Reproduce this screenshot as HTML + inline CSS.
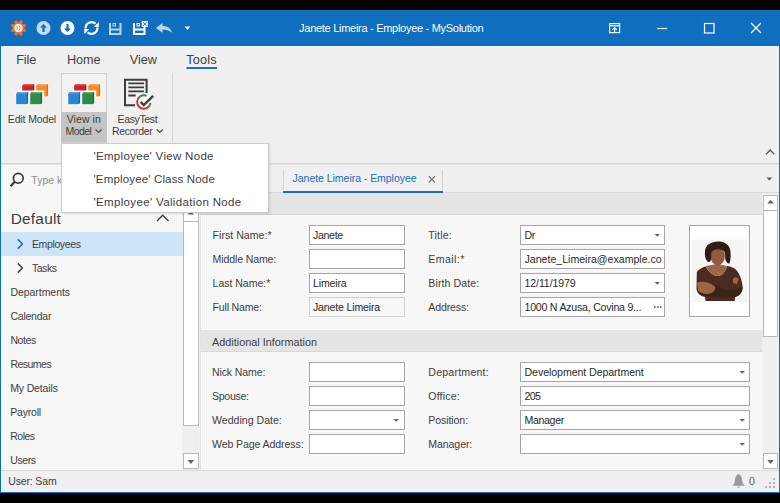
<!DOCTYPE html>
<html><head><meta charset="utf-8">
<style>
html,body{margin:0;padding:0;}
body{width:780px;height:503px;background:#000;position:relative;overflow:hidden;font-family:"Liberation Sans",sans-serif;}
.a{position:absolute;box-sizing:border-box;}
.t{position:absolute;white-space:pre;line-height:0;font-family:"Liberation Sans",sans-serif;}
.tb{position:absolute;box-sizing:border-box;background:#fff;border:1px solid #a6a6a6;height:20px;}
svg{position:absolute;left:0;top:0;}
.dot{background-color:#f9f9f9;background-image:conic-gradient(from 270deg, #f1f1f1 25%, transparent 0);background-size:2px 2px;}
</style></head><body>
<!-- window frame -->
<div class="a" style="left:0;top:10px;width:780px;height:483px;background:#106ebe;"></div>
<!-- ribbon -->
<div class="a" style="left:1px;top:46px;width:778px;height:117px;background:#f0f0f0;"></div>
<div class="a" style="left:1px;top:163px;width:778px;height:1px;background:#d9d9d9;"></div>
<div class="a" style="left:1px;top:164px;width:778px;height:1px;background:#e0e0e0;"></div>
<!-- nav panel -->
<div class="a" style="left:1px;top:165px;width:198px;height:1px;background:#f9f9f9;"></div>
<div class="a dot" style="left:1px;top:166px;width:198px;height:304px;background-position:1px 0;"></div>
<div class="a" style="left:182px;top:206px;width:17px;height:264px;background:#efefef;"></div>
<div class="a" style="left:199px;top:165px;width:2px;height:305px;background:#f2f2f2;"></div>
<div class="a" style="left:200px;top:193px;width:1px;height:277px;background:#e2e2e2;"></div>
<!-- tab strip -->
<div class="a" style="left:200px;top:165px;width:579px;height:28px;background:#f0f0f0;"></div>
<div class="a" style="left:200px;top:192px;width:579px;height:1px;background:#d9d9d9;"></div>
<div class="a" style="left:201px;top:193px;width:561px;height:21px;background:#e5e5e5;"></div>
<div class="a" style="left:201px;top:214px;width:561px;height:1px;background:#d5d5d5;"></div>
<div class="a dot" style="left:201px;top:215px;width:561px;height:255px;background-position:1px 1px;"></div>
<div class="a" style="left:762px;top:193px;width:17px;height:277px;background:#f0f0f0;"></div>
<!-- group header -->
<div class="a" style="left:201px;top:330px;width:561px;height:21px;background:#e5e5e5;"></div>
<div class="a" style="left:201px;top:351px;width:561px;height:1px;background:#d7d7d7;"></div>
<!-- status bar -->
<div class="a" style="left:1px;top:471px;width:778px;height:21px;background:#f0f0f0;"></div>
<div class="a" style="left:1px;top:470px;width:778px;height:1px;background:#d9d9d9;"></div>

<!-- highlight -->
<div class="a" style="left:1px;top:232px;width:182px;height:24px;background:#cde5f9;"></div>

<!-- View in Model pressed button -->
<div class="a" style="left:61px;top:73px;width:46px;height:70px;background:#f2f2f2;border:1px solid #d0d0d0;"></div>
<div class="a" style="left:61px;top:112px;width:46px;height:30px;background:#c4c4c4;"></div>
<div class="a" style="left:172px;top:73px;width:1px;height:69px;background:#d5d5d5;"></div>

<!-- nav scrollbar -->
<div class="a" style="left:183px;top:206px;width:16px;height:16px;background:#fff;border:1px solid #b9b9b9;"></div>
<div class="a" style="left:183px;top:221px;width:16px;height:205px;background:#fff;border:1px solid #b9b9b9;"></div>
<div class="a" style="left:183px;top:453px;width:16px;height:16px;background:#fff;border:1px solid #b9b9b9;"></div>

<!-- right scrollbar -->
<div class="a" style="left:763px;top:195px;width:15px;height:16px;background:#fff;border:1px solid #b9b9b9;"></div>
<div class="a" style="left:763px;top:210px;width:15px;height:127px;background:#fff;border:1px solid #b9b9b9;"></div>
<div class="a" style="left:763px;top:453px;width:15px;height:16px;background:#fff;border:1px solid #b9b9b9;"></div>

<!-- text boxes -->
<div class="tb" style="left:309px;top:225px;width:96px;"></div>
<div class="tb" style="left:309px;top:249px;width:96px;"></div>
<div class="tb" style="left:309px;top:273px;width:96px;"></div>
<div class="tb dot" style="left:309px;top:297px;width:96px;border-color:#d0d0d0;"></div>
<div class="tb" style="left:520px;top:225px;width:145px;"></div>
<div class="tb" style="left:520px;top:249px;width:145px;"></div>
<div class="tb" style="left:520px;top:273px;width:145px;"></div>
<div class="tb" style="left:520px;top:297px;width:145px;"></div>
<div class="a" style="left:689px;top:225px;width:61px;height:92px;background:#fff;border:1px solid #a6a6a6;"></div>
<div class="tb" style="left:309px;top:362px;width:96px;"></div>
<div class="tb" style="left:309px;top:386px;width:96px;"></div>
<div class="tb" style="left:309px;top:410px;width:96px;"></div>
<div class="tb" style="left:309px;top:434px;width:96px;"></div>
<div class="tb" style="left:520px;top:362px;width:230px;"></div>
<div class="tb" style="left:520px;top:386px;width:230px;"></div>
<div class="tb" style="left:520px;top:410px;width:230px;"></div>
<div class="tb" style="left:520px;top:434px;width:230px;"></div>

<!-- menu -->
<div class="a" style="left:61px;top:143px;width:208px;height:70px;background:#fff;border:1px solid #cccccc;box-shadow:1px 1px 2px rgba(0,0,0,0.12);z-index:5;"></div>

<svg width="780" height="503" viewBox="0 0 780 503">
  <!-- gear -->
  <g transform="translate(18.5,28)" fill="#f7701f">
    <circle r="5.7"/>
    <path d="M-1.1,-7.9 L1.1,-7.9 L2,-4.6 L-2,-4.6 Z" transform="rotate(22)"/><path d="M-1.1,-7.9 L1.1,-7.9 L2,-4.6 L-2,-4.6 Z" transform="rotate(67)"/><path d="M-1.1,-7.9 L1.1,-7.9 L2,-4.6 L-2,-4.6 Z" transform="rotate(112)"/><path d="M-1.1,-7.9 L1.1,-7.9 L2,-4.6 L-2,-4.6 Z" transform="rotate(157)"/><path d="M-1.1,-7.9 L1.1,-7.9 L2,-4.6 L-2,-4.6 Z" transform="rotate(202)"/><path d="M-1.1,-7.9 L1.1,-7.9 L2,-4.6 L-2,-4.6 Z" transform="rotate(247)"/><path d="M-1.1,-7.9 L1.1,-7.9 L2,-4.6 L-2,-4.6 Z" transform="rotate(292)"/><path d="M-1.1,-7.9 L1.1,-7.9 L2,-4.6 L-2,-4.6 Z" transform="rotate(337)"/>
    <circle r="4.1" cx="-0.1" fill="#fff"/>
    <path d="M-1.7,-2 Q-0.2,0 -1.7,2 M0.5,-2.8 Q2.6,0 0.5,2.8" stroke="#f7701f" stroke-width="1" fill="none"/>
  </g>
  <!-- up circle -->
  <circle cx="43.5" cy="28" r="7" fill="#c3dbf1"/>
  <path d="M43.5,24 L47,27.6 L44.6,27.6 L44.6,32 L42.4,32 L42.4,27.6 L40,27.6 Z" fill="#116cbd"/>
  <!-- down circle -->
  <circle cx="67.5" cy="28" r="7" fill="#ffffff"/>
  <path d="M67.5,32 L71,28.4 L68.6,28.4 L68.6,24 L66.4,24 L66.4,28.4 L64,28.4 Z" fill="#116cbd"/>
  <!-- refresh -->
  <g fill="none" stroke="#fff" stroke-width="2.1">
    <path d="M85.6,28.5 A6,6 0 0 1 95.5,23.6"/>
    <path d="M97.4,27.5 A6,6 0 0 1 87.5,32.4"/>
  </g>
  <path d="M98.8,22 L98.8,27.1 L93.8,27.1 Z" fill="#fff"/>
  <path d="M84.2,34 L84.2,28.9 L89.2,28.9 Z" fill="#fff"/>
  <!-- save 1 -->
  <g fill="#b9d4ee">
    <path d="M109,23 L111,23 L111,28.5 L119.5,28.5 L119.5,23 L121.5,23 L121.5,35 L109,35 Z M111,30.5 L111,33 L119.5,33 L119.5,30.5 Z" fill-rule="evenodd"/>
    <path d="M112.5,23 L116,23 L116,26.5 L112.5,26.5 Z M113.5,24 L113.5,25.5 L115,25.5 L115,24 Z" fill-rule="evenodd"/>
  </g>
  <!-- save 2 -->
  <g fill="#ffffff">
    <path d="M133,23 L135,23 L135,28.5 L143.5,28.5 L143.5,27 L145.5,27 L145.5,35 L133,35 Z M135,30.5 L135,33 L143.5,33 L143.5,30.5 Z" fill-rule="evenodd"/>
    <path d="M136.5,23 L140,23 L140,26.5 L136.5,26.5 Z M137.5,24 L137.5,25.5 L139,25.5 L139,24 Z" fill-rule="evenodd"/>
    <rect x="141.8" y="21" width="6" height="6"/>
  </g>
  <path d="M143,22.3 L146.6,25.8 M146.6,22.3 L143,25.8" stroke="#116cbd" stroke-width="1"/>
  <!-- undo -->
  <path d="M155.8,28 L162.5,23 L162.5,26 C167.5,26 171,28.5 172,32.8 C169,30.2 166,29.8 162.5,29.8 L162.5,32.8 Z" fill="#bcd5ee"/>
  <!-- qat dropdown -->
  <path d="M184.6,26.6 L190.4,26.6 L187.5,30.1 Z" fill="#fff"/>
  <!-- right title icons -->
  <g fill="none" stroke="#fff" stroke-width="1.2">
    <rect x="609.6" y="23.6" width="10" height="9"/>
    <path d="M609.6,25.8 L619.6,25.8"/>
    <path d="M614.6,32.6 L614.6,27.6 M612.4,29.8 L614.6,27.6 L616.8,29.8"/>
    <path d="M657,28.5 L667.2,28.5"/>
    <rect x="704.5" y="23.5" width="9.5" height="9.5"/>
    <path d="M751,23 L761,33 M761,23 L751,33"/>
  </g>

  <!-- Edit Model icon -->
  <g id="blocks">
    <g stroke="#ffffff" stroke-width="1.6" stroke-linejoin="round" style="paint-order:stroke">
      <path d="M22.2,85.6 L23.5,84.3 L34.2,84.3 L34.2,89.3 L33,90.5 L22.2,90.5 Z" fill="#d4202a"/>
      <path d="M36.2,85.6 L37.5,84.3 L48.1,84.3 L48.1,95.2 L46.8,96.5 L44.2,96.5 L44.2,90.5 L36.2,90.5 Z" fill="#f68b2b"/>
      <path d="M16.2,93.5 L17.7,92 L28.1,92 L28.1,102.8 L26.7,104.2 L16.2,104.2 Z" fill="#2a86d3"/>
      <path d="M30.2,93.5 L31.7,92 L42.1,92 L42.1,102.8 L40.7,104.2 L30.2,104.2 Z" fill="#2f8b45"/>
    </g>
    <path d="M22.2,85.6 L23.5,84.3 L34.2,84.3 L33,85.6 Z" fill="#e4545b"/>
    <path d="M33,85.6 L34.2,84.3 L34.2,89.3 L33,90.5 Z" fill="#a5131b"/>
    <path d="M36.2,85.6 L37.5,84.3 L48.1,84.3 L46.8,85.6 Z" fill="#f9a960"/>
    <path d="M46.8,85.6 L48.1,84.3 L48.1,95.2 L46.8,96.5 Z" fill="#d76e18"/>
    <path d="M16.2,93.5 L17.7,92 L28.1,92 L26.7,93.5 Z" fill="#5ea6e2"/>
    <path d="M26.7,93.5 L28.1,92 L28.1,102.8 L26.7,104.2 Z" fill="#1d66a8"/>
    <path d="M30.2,93.5 L31.7,92 L42.1,92 L40.7,93.5 Z" fill="#5fae72"/>
    <path d="M40.7,93.5 L42.1,92 L42.1,102.8 L40.7,104.2 Z" fill="#226b35"/>
  </g>
  <use href="#blocks" x="52" y="0"/>

  <!-- EasyTest icon -->
  <g fill="none" stroke="#3d3d3d" stroke-width="2">
    <path d="M135,105.2 L125,105.2 L125,79.8 L146.6,79.8 L146.6,93"/>
    <path d="M128.3,83.4 L144,83.4 M128.3,87.3 L144,87.3 M128.3,91.3 L144,91.3 M128.3,95.5 L135.7,95.5" stroke-width="1.8"/>
  </g>
  <circle cx="143.8" cy="102" r="8" fill="#fbfbfb"/>
  <path d="M139.95,96.51 A6.7,6.7 0 1 0 149.29,105.85" fill="none" stroke="#dc2a2f" stroke-width="1.9"/>
  <path d="M139.95,96.51 A6.7,6.7 0 0 1 146.63,95.93" fill="none" stroke="#259437" stroke-width="1.9"/>
  <path d="M149.29,105.85 A6.7,6.7 0 0 0 150.43,102.93" fill="none" stroke="#259437" stroke-width="1.9"/>
  <path d="M140.6,101.9 L143.8,105 L153.1,95.8" fill="none" stroke="#3f3f3f" stroke-width="2.4"/>

  <!-- ribbon chevrons -->
  <path d="M95.5,129.5 L98.6,132.4 L101.7,129.5" fill="none" stroke="#505050" stroke-width="1.3"/>
  <path d="M156.7,129.5 L159.8,132.4 L162.9,129.5" fill="none" stroke="#505050" stroke-width="1.3"/>
  <!-- tools underline -->
  <rect x="186.5" y="67" width="30.5" height="2" fill="#1c6cc0"/>
  <!-- collapse caret -->
  <path d="M766,154.4 L770.2,150 L774.4,154.4" fill="none" stroke="#555" stroke-width="1.3"/>

  <!-- search icon -->
  <circle cx="18.3" cy="178.3" r="4.9" fill="none" stroke="#3a3a3a" stroke-width="1.7"/>
  <path d="M14.8,181.8 L10.5,186.3" stroke="#3a3a3a" stroke-width="2.2"/>
  <!-- default caret -->
  <path d="M157,221 L162.7,215.3 L168.5,221" fill="none" stroke="#444" stroke-width="1.4"/>
  <!-- nav chevrons -->
  <path d="M17.8,239.4 L22.4,244 L17.8,248.6" fill="none" stroke="#1c6cc0" stroke-width="1.5"/>
  <path d="M17.8,263.4 L22.4,268 L17.8,272.6" fill="none" stroke="#444" stroke-width="1.5"/>
  <!-- nav scrollbar arrows -->
  <path d="M187.5,214.6 L190.75,211.2 L194,214.6 Z" fill="#666"/>
  <path d="M187.5,460 L194.2,460 L190.85,463.9 Z" fill="#666"/>

  <!-- tab -->
  <rect x="283" y="170" width="1" height="20" fill="#d3d3d3"/>
  <rect x="442" y="170" width="1" height="20" fill="#d3d3d3"/>
  <rect x="283" y="191" width="160" height="2" fill="#1c6cc0"/>
  <path d="M428.8,176.2 L435,182.4 M435,176.2 L428.8,182.4" stroke="#6a6a6a" stroke-width="1.1"/>
  <path d="M766.4,177.4 L772.2,177.4 L769.3,180.6 Z" fill="#555"/>

  <!-- right scrollbar arrows -->
  <path d="M767.2,203.5 L773.9,203.5 L770.55,199.7 Z" fill="#666"/>
  <path d="M767.2,460 L773.9,460 L770.55,463.9 Z" fill="#666"/>

  <!-- combo arrows -->
  <g fill="#666">
    <path d="M654.5,234 L660,234 L657.25,236.8 Z"/>
    <path d="M654.5,282 L660,282 L657.25,284.8 Z"/>
    <path d="M393.5,419 L399,419 L396.25,421.8 Z"/>
    <path d="M739.5,371 L745,371 L742.25,373.8 Z"/>
    <path d="M739.5,419 L745,419 L742.25,421.8 Z"/>
    <path d="M739.5,443 L745,443 L742.25,445.8 Z"/>
  </g>
  <!-- ellipsis -->
  <g fill="#444">
    <rect x="654" y="306.3" width="1.5" height="1.5"/>
    <rect x="657" y="306.3" width="1.5" height="1.5"/>
    <rect x="660" y="306.3" width="1.5" height="1.5"/>
  </g>

  <!-- photo -->
  <g>
    <rect x="691.5" y="239.6" width="56" height="62.4" fill="#f7f5f3"/>
    <path d="M705.6,266.5 C701,268 697.5,270 696.8,272.5 L696.5,289 C697,293 700,296 705,297 L705.6,301 L734.8,301 L735,297 C740,296 743,292 742.6,286.4 C742,280 739,271 733.9,268 C731,266.8 729,266.2 727,266 C726,271 722,276 718,276 C713,276 708,271 705.6,266.5 Z" fill="#4b2a1f"/>
    <path d="M705.6,266.5 C708,271 713,276 718,276 C722,276 726,271 727,266 C724,265 721,264.5 718,264.5 C713,264.5 709,265 705.6,266.5 Z" fill="#9a6646"/>
    <ellipse cx="717.7" cy="256" rx="7.2" ry="9.3" fill="#8f5c3d"/>
    <path d="M718,241.5 C711,241.5 705.5,245 705,251 C704.5,256 705.5,260 708,262 C709.5,262.5 711,261 711,259 L711.2,253 C712.5,250 715.5,249.3 718,249.3 C721,249.3 723.8,250 725,253 L725.3,259 C726,262 727.5,264 729.5,263.5 C731,259 730.9,253 730,249 C728.5,244 724,241.5 718,241.5 Z" fill="#2e1d14"/>
    <path d="M697,285 C706,282 716,285 724,289 C731,291.5 738,290 742.6,286.5 C742.5,291.5 740,295.5 735,297 C725,298 713,297 703,295 C699,293.5 697,290 697,285 Z" fill="#3d2218"/>
    <path d="M697,283 C701,280.5 709,281.5 715,286.5 C716,289 714,292.5 710,293.5 C706,294.5 700.5,293.5 698,290.5 Z" fill="#9a6646"/>
    <path d="M733,279 C734.5,276.5 737.5,277 738.5,279.5 L737,284 L733,283 Z" fill="#9a6646"/>
    <circle cx="718.3" cy="272.5" r="0.9" fill="#e07a2a"/>
  </g>
  <!-- bell -->
  <path d="M738.5,474 C736.6,474.6 735.4,476.6 735.1,479 L734.6,482.3 C734.2,484 733.2,485 732.4,485.8 L744.7,485.8 C743.9,485 742.9,484 742.5,482.3 L742,479 C741.7,476.6 740.5,474.6 738.5,474 Z" fill="#9a9a9a"/>
  <rect x="737.4" y="486.6" width="2.2" height="1" fill="#8a8a8a"/>
  <!-- grip -->
  <g fill="#b3b3b3">
    <rect x="773" y="478" width="2" height="2"/>
    <rect x="769" y="482" width="2" height="2"/>
    <rect x="773" y="482" width="2" height="2"/>
    <rect x="765" y="486" width="2" height="2"/>
    <rect x="769" y="486" width="2" height="2"/>
    <rect x="773" y="486" width="2" height="2"/>
  </g>
</svg>
<div class="t" id="t0" style="left:299.10px;top:28.19px;font-size:11px;color:#ffffff;letter-spacing:-0.285px;">Janete Limeira - Employee - MySolution</div>
<div class="t" id="t1" style="left:16.30px;top:60.00px;font-size:12.7px;color:#404040;letter-spacing:-0.184px;">File</div>
<div class="t" id="t2" style="left:67.10px;top:60.00px;font-size:12.7px;color:#404040;letter-spacing:-0.148px;">Home</div>
<div class="t" id="t3" style="left:129.70px;top:60.00px;font-size:12.7px;color:#404040;letter-spacing:-0.027px;">View</div>
<div class="t" id="t4" style="left:186.20px;top:60.00px;font-size:12.7px;color:#404040;letter-spacing:0.194px;">Tools</div>
<div class="t" id="t5" style="left:7.80px;top:119.36px;font-size:10.5px;color:#404040;letter-spacing:-0.134px;">Edit Model</div>
<div class="t" id="t6" style="left:66.70px;top:119.36px;font-size:10.5px;color:#404040;letter-spacing:0.088px;">View in</div>
<div class="t" id="t7" style="left:65.60px;top:131.06px;font-size:10.5px;color:#404040;letter-spacing:-0.577px;">Model</div>
<div class="t" id="t8" style="left:117.50px;top:119.36px;font-size:10.5px;color:#404040;letter-spacing:-0.344px;">EasyTest</div>
<div class="t" id="t9" style="left:111.90px;top:131.06px;font-size:10.5px;color:#404040;letter-spacing:-0.327px;">Recorder</div>
<div class="t" id="t10" style="left:31.30px;top:179.96px;font-size:10.5px;color:#8c8c8c;">Type keywords</div>
<div class="t" id="t11" style="left:10.70px;top:218.83px;font-size:15.5px;color:#404040;letter-spacing:0.179px;">Default</div>
<div class="t" id="t12" style="left:32.00px;top:244.36px;font-size:10.5px;color:#404040;letter-spacing:-0.382px;">Employees</div>
<div class="t" id="t13" style="left:31.90px;top:268.36px;font-size:10.5px;color:#404040;letter-spacing:-0.436px;">Tasks</div>
<div class="t" id="t14" style="left:10.40px;top:292.36px;font-size:10.5px;color:#404040;letter-spacing:-0.041px;">Departments</div>
<div class="t" id="t15" style="left:10.40px;top:316.36px;font-size:10.5px;color:#404040;letter-spacing:-0.218px;">Calendar</div>
<div class="t" id="t16" style="left:10.40px;top:340.36px;font-size:10.5px;color:#404040;letter-spacing:-0.409px;">Notes</div>
<div class="t" id="t17" style="left:10.40px;top:364.36px;font-size:10.5px;color:#404040;letter-spacing:-0.510px;">Resumes</div>
<div class="t" id="t18" style="left:10.20px;top:388.36px;font-size:10.5px;color:#404040;letter-spacing:-0.146px;">My Details</div>
<div class="t" id="t19" style="left:10.20px;top:412.36px;font-size:10.5px;color:#404040;letter-spacing:-0.185px;">Payroll</div>
<div class="t" id="t20" style="left:10.20px;top:436.36px;font-size:10.5px;color:#404040;letter-spacing:-0.490px;">Roles</div>
<div class="t" id="t21" style="left:10.20px;top:460.36px;font-size:10.5px;color:#404040;letter-spacing:-0.380px;">Users</div>
<div class="t" id="t22" style="left:93.50px;top:156.02px;font-size:11.5px;color:#404040;letter-spacing:0.308px;z-index:6;">&#x27;Employee&#x27; View Node</div>
<div class="t" id="t23" style="left:93.50px;top:179.02px;font-size:11.5px;color:#404040;letter-spacing:0.156px;z-index:6;">&#x27;Employee&#x27; Class Node</div>
<div class="t" id="t24" style="left:93.50px;top:202.02px;font-size:11.5px;color:#404040;letter-spacing:0.345px;z-index:6;">&#x27;Employee&#x27; Validation Node</div>
<div class="t" id="t25" style="left:8.20px;top:481.36px;font-size:10.5px;color:#404040;letter-spacing:-0.137px;">User: Sam</div>
<div class="t" id="t26" style="left:292.60px;top:177.56px;font-size:10.5px;color:#1c6cc0;letter-spacing:-0.038px;">Janete Limeira - Employee</div>
<div class="t" id="t27" style="left:212.60px;top:235.03px;font-size:10.6px;color:#404040;letter-spacing:0.011px;">First Name:*</div>
<div class="t" id="t28" style="left:212.60px;top:259.03px;font-size:10.6px;color:#404040;letter-spacing:-0.151px;">Middle Name:</div>
<div class="t" id="t29" style="left:212.60px;top:283.03px;font-size:10.6px;color:#404040;letter-spacing:-0.060px;">Last Name:*</div>
<div class="t" id="t30" style="left:212.60px;top:307.03px;font-size:10.6px;color:#404040;letter-spacing:-0.213px;">Full Name:</div>
<div class="t" id="t31" style="left:428.30px;top:235.03px;font-size:10.6px;color:#404040;letter-spacing:0.164px;">Title:</div>
<div class="t" id="t32" style="left:428.30px;top:259.03px;font-size:10.6px;color:#404040;letter-spacing:0.406px;">Email:*</div>
<div class="t" id="t33" style="left:428.30px;top:283.03px;font-size:10.6px;color:#404040;letter-spacing:0.095px;">Birth Date:</div>
<div class="t" id="t34" style="left:428.30px;top:307.03px;font-size:10.6px;color:#404040;letter-spacing:-0.159px;">Address:</div>
<div class="t" id="t35" style="left:313.00px;top:234.73px;font-size:10.6px;color:#2a2a2a;letter-spacing:-0.323px;">Janete</div>
<div class="t" id="t36" style="left:313.00px;top:282.73px;font-size:10.6px;color:#2a2a2a;letter-spacing:-0.175px;">Limeira</div>
<div class="t" id="t37" style="left:313.00px;top:306.73px;font-size:10.6px;color:#2a2a2a;letter-spacing:-0.177px;">Janete Limeira</div>
<div class="t" id="t38" style="left:524.50px;top:234.73px;font-size:10.6px;color:#2a2a2a;letter-spacing:-0.488px;">Dr</div>
<div class="t" id="t39" style="left:524.50px;top:258.73px;font-size:10.6px;color:#2a2a2a;letter-spacing:-0.007px;width:137px;overflow:hidden;line-height:14px;top:251.73px;">Janete_Limeira@example.com</div>
<div class="t" id="t40" style="left:524.50px;top:282.73px;font-size:10.6px;color:#2a2a2a;letter-spacing:-0.115px;">12/11/1979</div>
<div class="t" id="t41" style="left:524.50px;top:306.73px;font-size:10.6px;color:#2a2a2a;letter-spacing:-0.229px;">1000 N Azusa, Covina 9...</div>
<div class="t" id="t42" style="left:212.00px;top:341.66px;font-size:10.8px;color:#404040;letter-spacing:0.027px;">Additional Information</div>
<div class="t" id="t43" style="left:212.00px;top:372.33px;font-size:10.6px;color:#404040;letter-spacing:-0.150px;">Nick Name:</div>
<div class="t" id="t44" style="left:212.00px;top:396.33px;font-size:10.6px;color:#404040;letter-spacing:-0.312px;">Spouse:</div>
<div class="t" id="t45" style="left:212.00px;top:420.33px;font-size:10.6px;color:#404040;letter-spacing:-0.008px;">Wedding Date:</div>
<div class="t" id="t46" style="left:212.00px;top:444.33px;font-size:10.6px;color:#404040;letter-spacing:-0.116px;">Web Page Address:</div>
<div class="t" id="t47" style="left:428.30px;top:372.33px;font-size:10.6px;color:#404040;letter-spacing:0.210px;">Department:</div>
<div class="t" id="t48" style="left:428.30px;top:396.33px;font-size:10.6px;color:#404040;letter-spacing:0.163px;">Office:</div>
<div class="t" id="t49" style="left:428.30px;top:420.33px;font-size:10.6px;color:#404040;letter-spacing:-0.105px;">Position:</div>
<div class="t" id="t50" style="left:428.30px;top:444.33px;font-size:10.6px;color:#404040;letter-spacing:-0.109px;">Manager:</div>
<div class="t" id="t51" style="left:524.50px;top:372.03px;font-size:10.6px;color:#2a2a2a;letter-spacing:-0.068px;">Development Department</div>
<div class="t" id="t52" style="left:524.50px;top:396.03px;font-size:10.6px;color:#2a2a2a;letter-spacing:-0.694px;">205</div>
<div class="t" id="t53" style="left:524.50px;top:420.03px;font-size:10.6px;color:#2a2a2a;letter-spacing:-0.352px;">Manager</div>
<div class="t" id="t54" style="left:749.00px;top:481.33px;font-size:10.6px;color:#5a5a5a;">0</div>
</body></html>
